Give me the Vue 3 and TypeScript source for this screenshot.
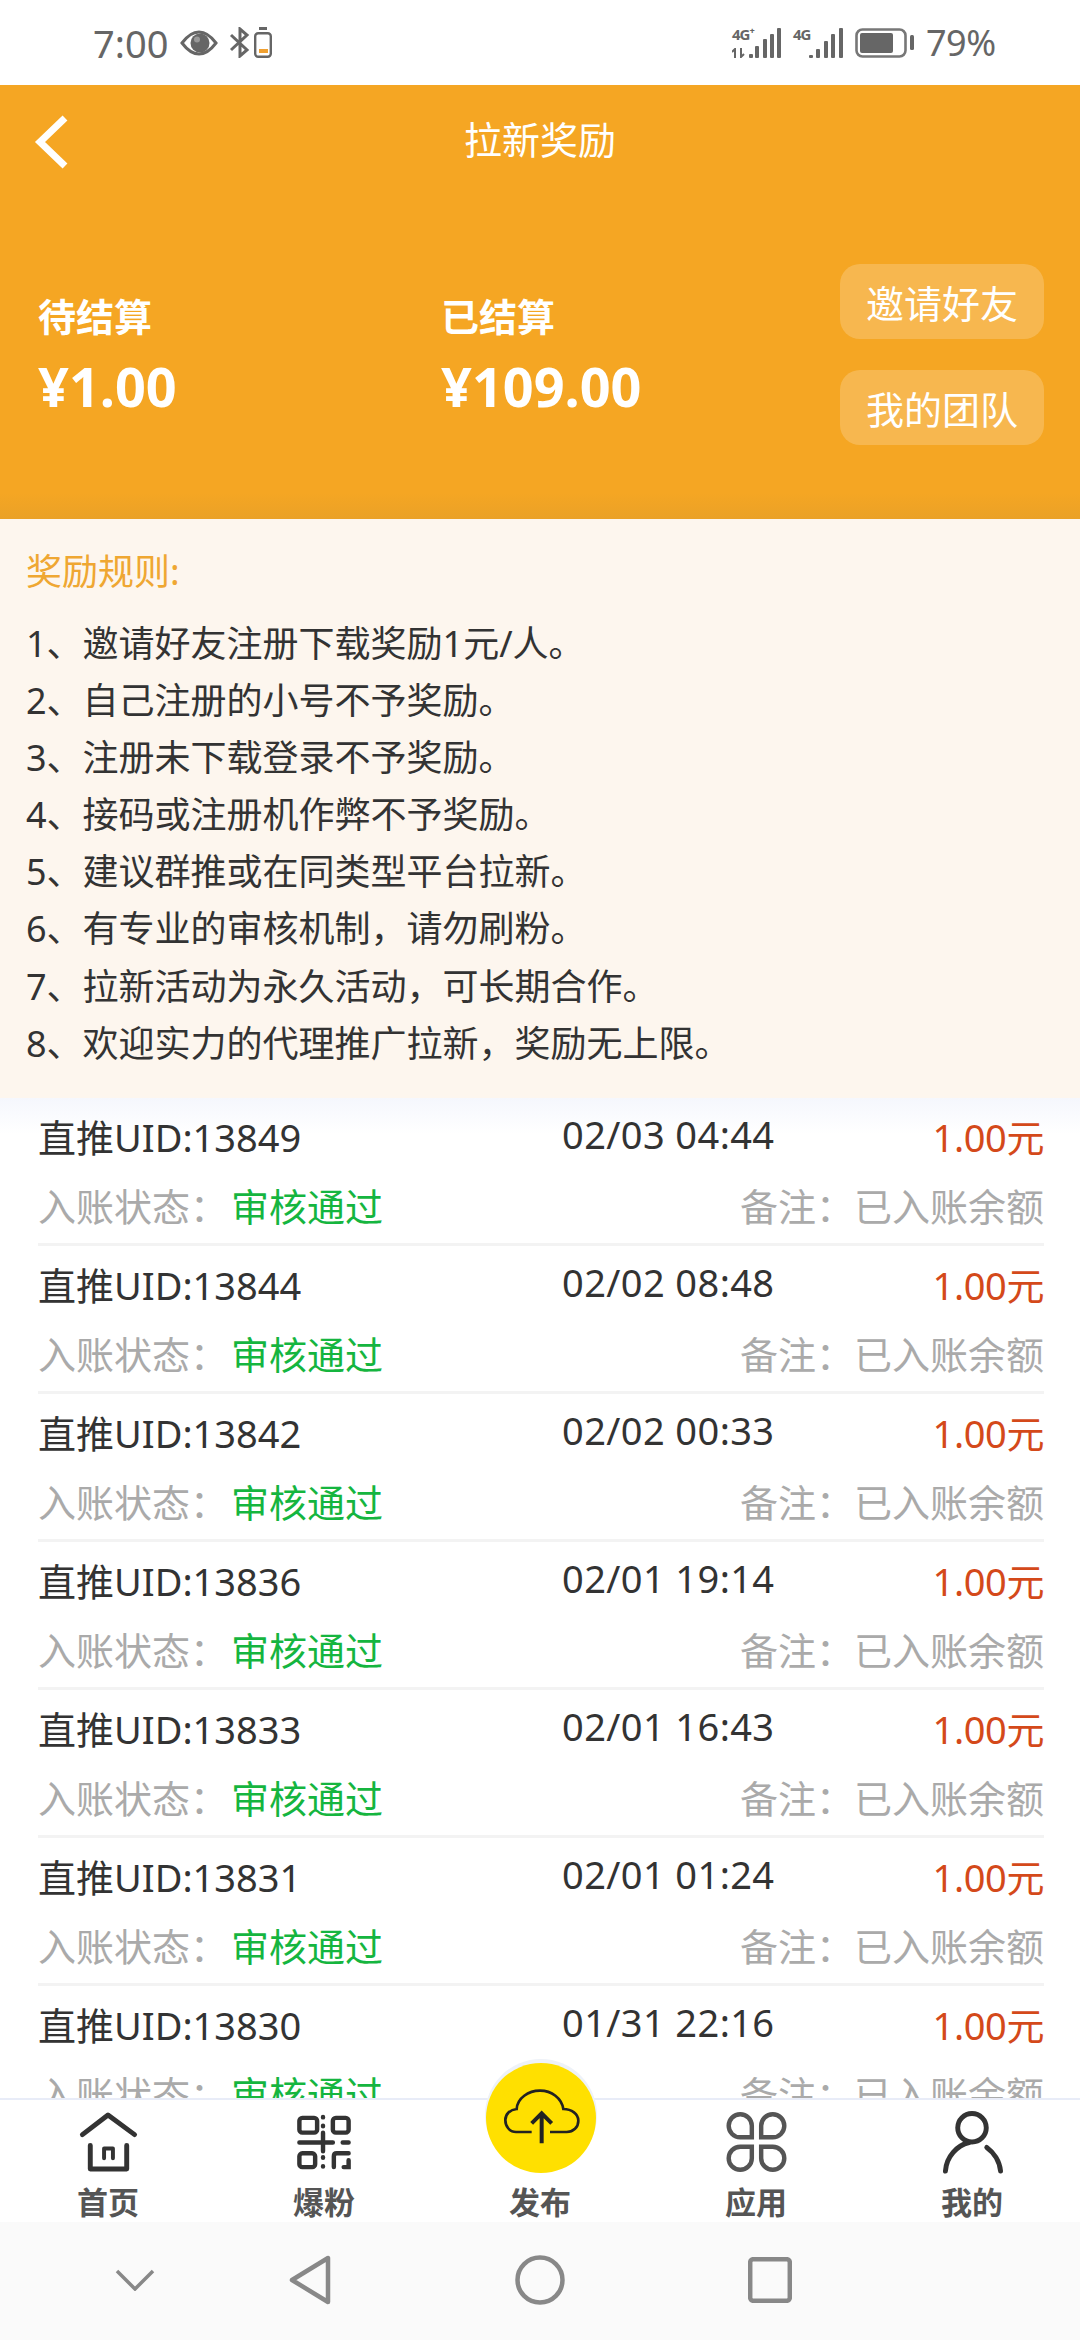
<template>
  <div class="page">
    <!-- system status bar -->
    <div class="status">
      <span class="status__time">7:00</span>
      <svg class="ic-eye" width="38" height="26" viewBox="0 0 38 26">
        <path d="M2 13C8 5 13 2 19 2s11 3 17 11c-6 8-11 11-17 11S8 21 2 13z" fill="none" stroke="#666" stroke-width="3" />
        <circle cx="20" cy="13" r="9.5" fill="#666" />
        <circle cx="17" cy="9.5" r="3" fill="#999" />
      </svg>
      <svg class="ic-bt" width="21" height="31" viewBox="0 0 21 31">
        <path d="M2 8l16 15-7 6V2l7 6L2 23" fill="none" stroke="#666" stroke-width="3" />
      </svg>
      <svg class="ic-mini-batt" width="18" height="31" viewBox="0 0 18 31">
        <rect x="5" y="0" width="8" height="3" fill="#666" />
        <rect x="1.2" y="6.2" width="15.6" height="23.6" rx="3" fill="none" stroke="#666" stroke-width="2.4" />
        <rect x="5" y="22" width="9" height="4" fill="#f0a030" />
      </svg>
      <div class="status__spacer" />
      <div class="sig">
        <div class="sig__tag sig__tag--plus">
          <span>4G⁺</span>
          <svg width="16" height="10" viewBox="0 0 16 10">
            <path d="M3 10V1L0 4M9 0v9l3-3" fill="none" stroke="#666" stroke-width="2" />
          </svg>
        </div>
        <svg width="32" height="30" viewBox="0 0 32 30">
          <g fill="#666">
            <rect x="0" y="26" width="4" height="4" rx="1" /><rect x="6" y="18" width="4" height="12" rx="1" />
            <rect x="14" y="11" width="4" height="19" rx="1" /><rect x="21" y="6" width="4" height="24" rx="1" />
            <rect x="28" y="0" width="4" height="30" rx="1" />
          </g>
        </svg>
      </div>
      <div class="sig sig--second">
        <div class="sig__tag"><span>4G</span></div>
        <svg width="34" height="30" viewBox="0 0 34 30">
          <g fill="#666">
            <rect x="0" y="27" width="4" height="3" rx="1" /><rect x="7" y="21" width="4" height="9" rx="1" />
            <rect x="15" y="13" width="4" height="17" rx="1" /><rect x="22" y="6" width="4" height="24" rx="1" />
            <rect x="30" y="0" width="4" height="30" rx="1" />
          </g>
        </svg>
      </div>
      <svg class="ic-batt" width="59" height="30" viewBox="0 0 59 30">
        <rect x="1.5" y="1.5" width="49" height="27" rx="6" fill="none" stroke="#777" stroke-width="2.6" />
        <rect x="5" y="5" width="33" height="20" rx="2" fill="#666" />
        <rect x="55" y="7" width="4" height="15" rx="1.5" fill="#666" />
      </svg>
      <span class="status__pct">79%</span>
    </div>

    <!-- orange header with balances -->
    <header class="hero">
      <div class="hero__nav">
        <svg class="hero__back" width="36" height="54" viewBox="0 0 36 54">
          <path d="M31 3L6 27l25 24" fill="none" stroke="#fff" stroke-width="7" />
        </svg>
        <span class="hero__title">拉新奖励</span>
      </div>
      <div class="hero__body">
        <div class="stat stat--pending">
          <div class="stat__label">待结算</div>
          <div class="stat__value">¥1.00</div>
        </div>
        <div class="stat">
          <div class="stat__label">已结算</div>
          <div class="stat__value">¥109.00</div>
        </div>
        <div class="hero__btns">
          <div class="pill">邀请好友</div>
          <div class="pill">我的团队</div>
        </div>
      </div>
    </header>

    <section class="rules">
      <div class="rules__title">奖励规则:</div>
      <div v-for="(r, i) in rules" :key="i" class="rules__line">{{ i + 1 }}、{{ r }}</div>
    </section>

    <div class="list">
      <div v-for="row in rows" :key="row.uid" class="row">
        <div class="row__top">
          <span class="row__uid">直推UID:{{ row.uid }}</span>
          <span class="row__time">{{ row.time }}</span>
          <span class="row__amount">1.00元</span>
        </div>
        <div class="row__bottom">
          <span class="row__muted">入账状态&#xFF1A;<em class="row__ok">审核通过</em></span>
          <span class="row__muted">备注&#xFF1A;已入账余额</span>
        </div>
      </div>
    </div>

    <nav class="tabs">
      <div class="tabs__fab">
        <svg width="110" height="110" viewBox="18 25 330 330">
          <path d="M155 232H108C88 232 76 214 76 196C76 178 90 165 110 163C112 130 145 108 180 108C215 108 245 130 250 163C275 163 295 178 295 198C295 218 280 232 260 232H210" fill="none" stroke="#222" stroke-width="8" />
          <path d="M185 266V176M155 206l30-30 30 30" fill="none" stroke="#222" stroke-width="12" />
        </svg>
      </div>
      <div v-for="t in tabs" :key="t.label" class="tab">
        <svg class="tab__icon" width="66" height="64" viewBox="0 0 66 64">
          <g v-if="t.icon === 'home'" fill="none" stroke="#333" stroke-width="5" stroke-linecap="round" stroke-linejoin="round">
            <path d="M7 24L33 4l27 20" />
            <path d="M15 35v24h37V35" />
            <path d="M29 48V38h9v10" stroke-width="4" />
          </g>
          <g v-else-if="t.icon === 'qr'" fill="none" stroke="#333" stroke-width="4.5" stroke-linecap="round">
            <rect x="8" y="7" width="18" height="15" rx="3" />
            <rect x="42" y="7" width="16" height="15" rx="3" />
            <rect x="8" y="43" width="16" height="14" rx="3" />
            <path d="M32 6v.5M32 15v.5M32 22v19M8 32h34M52 32h6M32 47v.5M32 56v.5" />
            <path d="M58 43H46q-3 0-3 3v11M53 57h5v-7" />
          </g>
          <g v-else-if="t.icon === 'apps'" fill="none" stroke="#555" stroke-width="4.5">
            <path d="M28.75 26.75H17A11.75 11.75 0 1 1 28.75 15z" />
            <path d="M38.25 26.75H50A11.75 11.75 0 1 0 38.25 15z" />
            <path d="M28.75 36.25H17A11.75 11.75 0 1 0 28.75 48z" />
            <path d="M38.25 36.25H50A11.75 11.75 0 1 1 38.25 48z" />
          </g>
          <g v-else-if="t.icon === 'user'" fill="none" stroke="#333" stroke-width="5" stroke-linecap="round">
            <circle cx="33" cy="17" r="14.5" />
            <path d="M30 32C18 35 7 46 6 61M48 37c7 5 13 14 14 24" />
          </g>
        </svg>
        <span class="tab__label">{{ t.label }}</span>
      </div>
    </nav>

    <!-- system navigation bar -->
    <div class="sysnav">
      <svg class="sysnav__chev" width="40" height="22" viewBox="0 0 40 22">
        <path d="M2 2l18 18L38 2" fill="none" stroke="#888" stroke-width="3.5" />
      </svg>
      <svg class="sysnav__back" width="44" height="50" viewBox="0 0 44 50">
        <path d="M40 3v44L4 25z" fill="none" stroke="#888" stroke-width="4.5" stroke-linejoin="round" />
      </svg>
      <svg class="sysnav__home" width="50" height="50" viewBox="0 0 50 50">
        <circle cx="25" cy="25" r="22.5" fill="none" stroke="#888" stroke-width="4.5" />
      </svg>
      <svg class="sysnav__recent" width="44" height="46" viewBox="0 0 44 46">
        <rect x="2.2" y="2.2" width="39.6" height="41.6" rx="3" fill="none" stroke="#888" stroke-width="4.5" />
      </svg>
    </div>
  </div>
</template>

<script setup lang="ts">
const rules = [
  '邀请好友注册下载奖励1元/人。',
  '自己注册的小号不予奖励。',
  '注册未下载登录不予奖励。',
  '接码或注册机作弊不予奖励。',
  '建议群推或在同类型平台拉新。',
  '有专业的审核机制\uFF0C请勿刷粉。',
  '拉新活动为永久活动\uFF0C可长期合作。',
  '欢迎实力的代理推广拉新\uFF0C奖励无上限。',
]

const rows = [
  { uid: 13849, time: '02/03 04:44' },
  { uid: 13844, time: '02/02 08:48' },
  { uid: 13842, time: '02/02 00:33' },
  { uid: 13836, time: '02/01 19:14' },
  { uid: 13833, time: '02/01 16:43' },
  { uid: 13831, time: '02/01 01:24' },
  { uid: 13830, time: '01/31 22:16' },
]

const tabs = [
  { label: '首页', icon: 'home' },
  { label: '爆粉', icon: 'qr' },
  { label: '发布', icon: 'none' },
  { label: '应用', icon: 'apps' },
  { label: '我的', icon: 'user' },
]
</script>

<style scoped>
.page {
  position: relative;
  width: 1080px;
  height: 2340px;
  display: flex;
  flex-direction: column;
  overflow: hidden;
  background: #fff;
  font-family: "Noto Sans", "Noto Sans CJK SC", sans-serif;
  color: #333;
}

.status {
  flex: none;
  height: 85px;
  display: flex;
  align-items: center;
  padding-left: 93px;
  color: #666;
}
.status__time { font-size: 38px; width: 87px; }
.ic-bt { margin-left: 11px; }
.ic-mini-batt { margin-left: 4px; }
.status__spacer { flex: 1; }
.sig { display: flex; align-items: flex-end; height: 30px; }
.sig--second { margin-left: 12px; }
.sig__tag {
  display: flex;
  flex-direction: column;
  justify-content: space-between;
  width: 16px;
  height: 30px;
  font-size: 15px;
  line-height: 12px;
  letter-spacing: -1px;
  font-weight: 700;
  white-space: nowrap;
}
.sig__tag--plus { width: 17px; }
.ic-batt { margin-left: 12px; }
.status__pct {
  width: 66px;
  margin-left: 12px;
  margin-right: 88px;
  font-size: 36px;
  letter-spacing: -0.5px;
  white-space: nowrap;
}

.hero {
  flex: none;
  height: 434px;
  color: #fff;
  background: linear-gradient(#f5a623 0, #f5a623 94%, #eaa127 100%);
}
.hero__nav {
  position: relative;
  height: 115px;
  display: flex;
  align-items: center;
  justify-content: center;
}
.hero__back { position: absolute; left: 34px; top: 30px; }
.hero__title { font-size: 38px; margin-top: -11px; }
.hero__body {
  display: flex;
  padding: 64px 36px 0 38px;
}
.stat { width: 403px; padding-top: 27px; }
.stat + .stat { width: 399px; }
.stat__label { font-size: 38px; line-height: 50px; font-weight: 700; }
.stat__value { font-size: 54px; line-height: 60px; font-weight: 700; margin-top: 15px; }
.hero__btns { display: flex; flex-direction: column; gap: 31px; }
.pill {
  width: 204px;
  height: 75px;
  display: flex;
  align-items: center;
  justify-content: center;
  border-radius: 20px;
  background: rgba(255, 255, 255, 0.2);
  font-size: 38px;
}

.rules {
  flex: none;
  box-sizing: border-box;
  height: 579px;
  padding: 28px 26px 0;
  background: #fdf6ee;
}
.rules__title { font-size: 36px; line-height: 50px; color: #efa732; margin-bottom: 18px; }
.rules__line { font-size: 36px; line-height: 57.1px; white-space: nowrap; color: #333; }

.list {
  flex: 1;
  min-height: 0;
  overflow: hidden;
  padding: 0 36px 0 38px;
  background: linear-gradient(#f5f7fd 0, #fff 36px);
}
.row {
  padding: 14px 0 12px;
  border-bottom: 3px solid #f3f3f3;
}
.row__top {
  display: grid;
  grid-template-columns: 524px 1fr auto;
  font-size: 38px;
  line-height: 50px;
}
.row__time { margin-top: -3px; letter-spacing: 0.4px; }
.row__amount { color: #d4491a; letter-spacing: -0.4px; }
.row__bottom {
  display: flex;
  justify-content: space-between;
  margin-top: 19px;
  font-size: 38px;
  line-height: 50px;
}
.row__muted { color: #aaa; white-space: pre; }
.row__ok { font-style: normal; color: #15b53f; margin-left: 3px; }

.tabs {
  position: relative;
  flex: none;
  height: 124px;
  display: flex;
  justify-content: space-around;
  background: #fff;
  border-top: 2px solid #e8ecf8;
  box-sizing: border-box;
}
.tabs__fab {
  position: absolute;
  left: 486px;
  top: -37px;
  width: 110px;
  height: 110px;
  display: flex;
  align-items: center;
  justify-content: center;
  border-radius: 50%;
  background: #ffe000;
  box-shadow: 0 -3px 0 1px #eef2f8;
}
.tab {
  width: 216px;
  display: flex;
  flex-direction: column;
  align-items: center;
  padding-top: 11px;
}
.tab__icon { height: 64px; }
.tab__label {
  font-size: 31px;
  line-height: 40px;
  margin-top: 8px;
  font-weight: 700;
  color: #555;
}

.sysnav {
  flex: none;
  height: 118px;
  position: relative;
  display: flex;
  align-items: center;
  background: #fafafa;
}
.sysnav__chev { margin-left: 115px; margin-top: -2px; }
.sysnav__back { margin-left: 133px; margin-top: -2px; }
.sysnav__home { margin-left: 183px; margin-top: -2px; }
.sysnav__recent { margin-left: 183px; margin-top: -2px; }
</style>

<style>
html, body { margin: 0; padding: 0; }
</style>
